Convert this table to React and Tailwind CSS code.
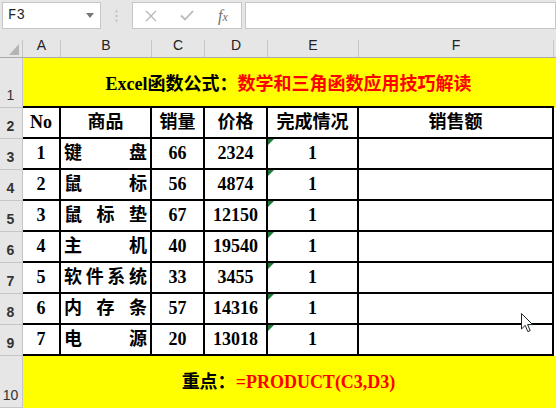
import React from 'react'

const rows = [
  [1, ['键', '盘'], 66, 2324],
  [2, ['鼠', '标'], 56, 4874],
  [3, ['鼠', '标', '垫'], 67, 12150],
  [4, ['主', '机'], 40, 19540],
  [5, ['软', '件', '系', '统'], 33, 3455],
  [6, ['内', '存', '条'], 57, 14316],
  [7, ['电', '源'], 20, 13018],
]

const serif = { fontFamily: '"Liberation Serif", "Noto Sans CJK SC", serif' }
const sans = { fontFamily: '"Liberation Sans", Arial, sans-serif' }

function RowHead({ n, h }) {
  return (
    <div className={`w-[23px] shrink-0 ${h} bg-[#e6e6e6] border-r border-b border-[#c6c6c6] flex items-end pl-[4px] pr-[5px] justify-center pb-[1px] text-[14px] text-[#333]`} style={sans}>
      {n}
    </div>
  )
}

export default function App() {
  return (
    <div className="relative w-[556px] h-[408px] overflow-hidden bg-[#e6e6e6] select-none">
      {/* formula bar */}
      <div className="h-[36px] flex items-start pt-[2px]">
        <div className="ml-[2px] w-[99px] h-[27px] bg-white border border-[#c6c6c6] flex items-center justify-between pl-[5px] pr-[6px]">
          <span className="text-[14px] text-[#222]" style={{ fontFamily: '"Liberation Mono", monospace' }}>F3</span>
          <svg width="8" height="5" viewBox="0 0 8 5"><path d="M0 0h8L4 5z" fill="#777" /></svg>
        </div>
        <div className="w-[31px] h-[27px] flex items-center justify-center">
          <svg width="3" height="12" viewBox="0 0 3 12">
            <circle cx="1.5" cy="1.5" r="1" fill="#b4b4b4" />
            <circle cx="1.5" cy="6" r="1" fill="#b4b4b4" />
            <circle cx="1.5" cy="10.5" r="1" fill="#b4b4b4" />
          </svg>
        </div>
        <div className="w-[110px] h-[27px] bg-white border border-[#c6c6c6] flex items-center">
          <div className="w-[36px] flex justify-center">
            <svg width="12" height="12" viewBox="0 0 12 12"><path d="M1 1l10 10M11 1L1 11" stroke="#b8b8b8" strokeWidth="1.4" /></svg>
          </div>
          <div className="w-[36px] flex justify-center">
            <svg width="14" height="11" viewBox="0 0 14 11"><path d="M1 5.5l4 4L13 1" stroke="#b8b8b8" strokeWidth="1.8" fill="none" /></svg>
          </div>
          <div className="w-[36px] flex justify-center text-[16px] italic text-[#6e6e6e]" style={serif}>
            <span>f<span className="text-[12px]">x</span></span>
          </div>
        </div>
        <div className="ml-[3px] flex-1 h-[27px] bg-white border border-[#c6c6c6]" />
      </div>

      {/* column headers */}
      <div className="h-[22px] flex border-b border-[#aaaaaa] text-[14px] text-[#222]" style={sans}>
        <div className="w-[23px] shrink-0 pt-[4px]">
          <div className="h-full border-r border-[#c6c6c6] flex items-end justify-end pr-[3px] pb-[2px]">
            <svg width="10" height="11" viewBox="0 0 10 11"><path d="M10 0v11H0z" fill="#b4b4b4" /></svg>
          </div>
        </div>
        {[
          ['A', 'w-[38px]'],
          ['B', 'w-[91px]'],
          ['C', 'w-[53px]'],
          ['D', 'w-[63px]'],
          ['E', 'w-[91px]'],
          ['F', 'w-[195px]'],
        ].map(([l, w]) => (
          <div key={l} className={`${w} shrink-0 pt-[4px]`}>
            <div className="h-full border-r border-[#c6c6c6] flex items-end justify-center pb-[1px]">{l}</div>
          </div>
        ))}
        <div className="flex-1" />
      </div>

      {/* row 1 */}
      <div className="flex">
        <RowHead n={1} h="h-[50px]" />
        <div className="w-[531px] h-[50px] bg-[#ffff00] border-b-2 border-black flex items-center justify-center pt-[4px] text-[18px] font-bold" style={serif}>
          <span className="text-black">Excel函数公式：</span>
          <span className="text-[#ff0000]">数学和三角函数应用技巧解读</span>
        </div>
        <div className="flex-1 bg-[#ffff00]" />
      </div>

      {/* row 2 */}
      <div className="flex text-[18px] font-bold text-black" style={serif}>
        <RowHead n={2} h="h-[31px]" />
        <div className="w-[38px] h-[31px] bg-white border-r-2 border-b-2 border-black flex items-center justify-center">No</div>
        <div className="w-[91px] h-[31px] bg-white border-r-2 border-b-2 border-black flex items-center justify-center">商品</div>
        <div className="w-[53px] h-[31px] bg-white border-r-2 border-b-2 border-black flex items-center justify-center">销量</div>
        <div className="w-[63px] h-[31px] bg-white border-r-2 border-b-2 border-black flex items-center justify-center">价格</div>
        <div className="w-[91px] h-[31px] bg-white border-r-2 border-b-2 border-black flex items-center justify-center">完成情况</div>
        <div className="w-[195px] h-[31px] bg-white border-r-2 border-b-2 border-black flex items-center justify-center">销售额</div>
        <div className="flex-1 bg-white" />
      </div>

      {/* data rows */}
      {rows.map(([no, name, qty, price], i) => (
        <div key={no} className="flex text-[18px] font-bold text-black" style={serif}>
          <RowHead n={i + 3} h="h-[31px]" />
          <div className="w-[38px] h-[31px] bg-white border-r-2 border-b-2 border-black flex items-center justify-center">{no}</div>
          <div className="w-[91px] h-[31px] bg-white border-r-2 border-b-2 border-black flex items-center justify-between pl-[3px] pr-[3px]">
            {name.map((c, k) => <span key={k}>{c}</span>)}
          </div>
          <div className="w-[53px] h-[31px] bg-white border-r-2 border-b-2 border-black flex items-center justify-center">{qty}</div>
          <div className="w-[63px] h-[31px] bg-white border-r-2 border-b-2 border-black flex items-center justify-center">{price}</div>
          <div className="relative w-[91px] h-[31px] bg-white border-r-2 border-b-2 border-black flex items-center justify-center">
            <span className="absolute top-0 left-0 w-0 h-0 border-t-[6px] border-r-[6px] border-t-[#1e7a38] border-r-transparent" />
            1
          </div>
          <div className="w-[195px] h-[31px] bg-white border-r-2 border-b-2 border-black" />
          <div className="flex-1 bg-white" />
        </div>
      ))}

      {/* row 10 */}
      <div className="flex">
        <RowHead n={10} h="h-[52px]" />
        <div className="flex-1 h-[52px] bg-[#ffff00] flex items-center justify-center pr-[2px] text-[18px] font-bold" style={serif}>
          <span className="text-black">重点：</span>
          <span className="text-[#ff0000]">=PRODUCT(C3,D3)</span>
        </div>
      </div>

      {/* mouse cursor */}
      <svg className="absolute left-[521px] top-[313px]" width="13" height="20" viewBox="0 0 13 20">
        <path d="M0.5 0.5V16L4.2 12.4L6.8 18.6L9.2 17.6L6.6 11.6H11.6Z" fill="#fff" stroke="#1a2a22" strokeWidth="1" strokeLinejoin="miter" />
      </svg>
    </div>
  )
}
